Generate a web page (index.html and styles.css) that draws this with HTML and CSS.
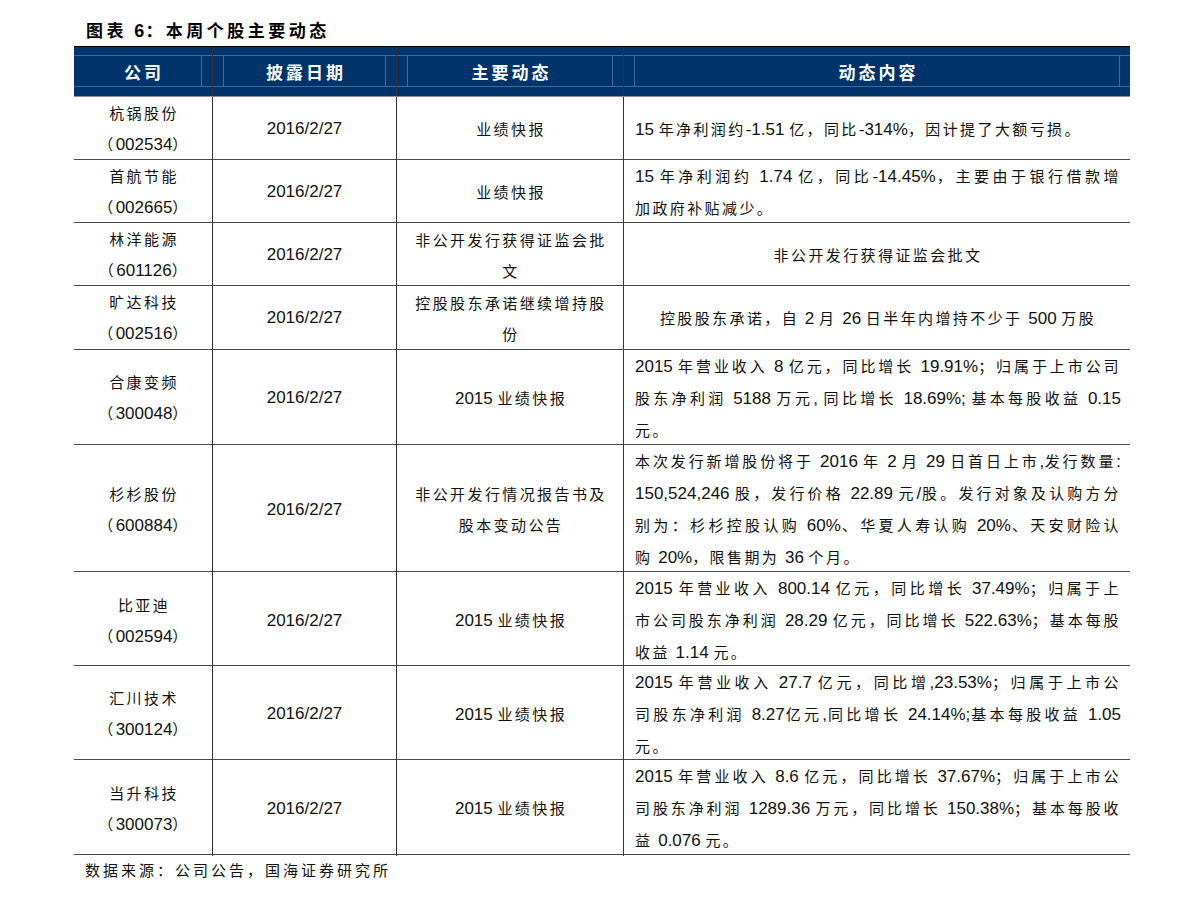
FILE: index.html
```html
<!DOCTYPE html>
<html lang="zh-CN">
<head>
<meta charset="utf-8">
<title>本周个股主要动态</title>
<link rel="stylesheet" href="styles.css">
</head>
<body>
<div class="page">
  <div class="title">图表 <span class="tn">6</span>：本周个股主要动态</div>
  <div class="tbl">
    <div class="thead">
      <div class="th c1"><div class="hl"><div class="hv nol">公司</div></div></div>
      <div class="th c2"><div class="hl"><div class="hv">披露日期</div></div></div>
      <div class="th c3"><div class="hl"><div class="hv">主要动态</div></div></div>
      <div class="th c4"><div class="hl"><div class="hv">动态内容</div></div></div>
    </div>

    <div class="row h63">
      <div class="td c1 ctr"><div>杭锅股份</div><div>（<span class="n">002534</span>）</div></div>
      <div class="td c2 ctr"><span class="n">2016/2/27</span></div>
      <div class="td c3 ctr"><div>业绩快报</div></div>
      <div class="td c4 txt"><div class="l"><span class="n">15 </span>年净利润约<span class="n">-1.51 </span>亿，同比<span class="n">-314%</span>，因计提了大额亏损。</div></div>
    </div>

    <div class="row h63">
      <div class="td c1 ctr"><div>首航节能</div><div>（<span class="n">002665</span>）</div></div>
      <div class="td c2 ctr"><span class="n">2016/2/27</span></div>
      <div class="td c3 ctr"><div>业绩快报</div></div>
      <div class="td c4 txt"><div class="l j"><span class="n">15 </span>年净利润约 <span class="n">1.74 </span>亿，同比<span class="n">-14.45%</span>，主要由于银行借款增</div><div class="l">加政府补贴减少。</div></div>
    </div>

    <div class="row h63">
      <div class="td c1 ctr"><div>林洋能源</div><div>（<span class="n">601126</span>）</div></div>
      <div class="td c2 ctr"><span class="n">2016/2/27</span></div>
      <div class="td c3 ctr"><div>非公开发行获得证监会批</div><div>文</div></div>
      <div class="td c4 ctr"><div>非公开发行获得证监会批文</div></div>
    </div>

    <div class="row h64">
      <div class="td c1 ctr"><div>旷达科技</div><div>（<span class="n">002516</span>）</div></div>
      <div class="td c2 ctr"><span class="n">2016/2/27</span></div>
      <div class="td c3 ctr"><div>控股股东承诺继续增持股</div><div>份</div></div>
      <div class="td c4 ctr"><div>控股股东承诺，自 <span class="n">2 </span>月 <span class="n">26 </span>日半年内增持不少于 <span class="n">500 </span>万股</div></div>
    </div>

    <div class="row h95">
      <div class="td c1 ctr"><div>合康变频</div><div>（<span class="n">300048</span>）</div></div>
      <div class="td c2 ctr"><span class="n">2016/2/27</span></div>
      <div class="td c3 ctr"><div><span class="n">2015 </span>业绩快报</div></div>
      <div class="td c4 txt"><div class="l j"><span class="n">2015 </span>年营业收入 <span class="n">8 </span>亿元，同比增长 <span class="n">19.91%</span>；归属于上市公司</div><div class="l j">股东净利润 <span class="n">5188 </span>万元<span class="n">, </span>同比增长 <span class="n">18.69%; </span>基本每股收益 <span class="n">0.15</span></div><div class="l">元。</div></div>
    </div>

    <div class="row h127">
      <div class="td c1 ctr"><div>杉杉股份</div><div>（<span class="n">600884</span>）</div></div>
      <div class="td c2 ctr"><span class="n">2016/2/27</span></div>
      <div class="td c3 ctr"><div>非公开发行情况报告书及</div><div>股本变动公告</div></div>
      <div class="td c4 txt"><div class="l j">本次发行新增股份将于 <span class="n">2016 </span>年 <span class="n">2 </span>月 <span class="n">29 </span>日首日上市<span class="n">,</span>发行数量<span class="n">:</span></div><div class="l j"><span class="n">150,524,246 </span>股，发行价格 <span class="n">22.89 </span>元<span class="n">/</span>股。发行对象及认购方分</div><div class="l j">别为：杉杉控股认购 <span class="n">60%</span>、华夏人寿认购 <span class="n">20%</span>、天安财险认</div><div class="l">购 <span class="n">20%</span>，限售期为 <span class="n">36 </span>个月。</div></div>
    </div>

    <div class="row h94">
      <div class="td c1 ctr"><div>比亚迪</div><div>（<span class="n">002594</span>）</div></div>
      <div class="td c2 ctr"><span class="n">2016/2/27</span></div>
      <div class="td c3 ctr"><div><span class="n">2015 </span>业绩快报</div></div>
      <div class="td c4 txt"><div class="l j"><span class="n">2015 </span>年营业收入 <span class="n">800.14 </span>亿元，同比增长 <span class="n">37.49%</span>；归属于上</div><div class="l j">市公司股东净利润 <span class="n">28.29 </span>亿元，同比增长 <span class="n">522.63%</span>；基本每股</div><div class="l">收益 <span class="n">1.14 </span>元。</div></div>
    </div>

    <div class="row h94">
      <div class="td c1 ctr"><div>汇川技术</div><div>（<span class="n">300124</span>）</div></div>
      <div class="td c2 ctr"><span class="n">2016/2/27</span></div>
      <div class="td c3 ctr"><div><span class="n">2015 </span>业绩快报</div></div>
      <div class="td c4 txt"><div class="l j"><span class="n">2015 </span>年营业收入 <span class="n">27.7 </span>亿元，同比增<span class="n">,23.53%</span>；归属于上市公</div><div class="l j">司股东净利润 <span class="n">8.27</span>亿元<span class="n">,</span>同比增长 <span class="n">24.14%;</span>基本每股收益 <span class="n">1.05</span></div><div class="l">元。</div></div>
    </div>

    <div class="row h95">
      <div class="td c1 ctr"><div>当升科技</div><div>（<span class="n">300073</span>）</div></div>
      <div class="td c2 ctr"><span class="n">2016/2/27</span></div>
      <div class="td c3 ctr"><div><span class="n">2015 </span>业绩快报</div></div>
      <div class="td c4 txt"><div class="l j"><span class="n">2015 </span>年营业收入 <span class="n">8.6 </span>亿元，同比增长 <span class="n">37.67%</span>；归属于上市公</div><div class="l j">司股东净利润 <span class="n">1289.36 </span>万元，同比增长 <span class="n">150.38%</span>；基本每股收</div><div class="l">益 <span class="n">0.076 </span>元。</div></div>
    </div>
  </div>
  <div class="foot">数据来源：公司公告，国海证券研究所</div>
</div>
</body>
</html>
```

FILE: styles.css
```css
html, body {
  margin: 0;
  padding: 0;
  background: #ffffff;
}
body {
  font-family: "Noto Sans CJK SC", "Liberation Sans", sans-serif;
  color: #111111;
}
.page {
  padding-left: 74px;
  width: 1056px;
}
.title {
  height: 46px;
  box-sizing: border-box;
  padding: 18px 0 0 12px;
  line-height: 24px;
  font-size: 17px;
  font-weight: 700;
  letter-spacing: 3.5px;
  color: #000;
}
.title .tn {
  font-family: "Liberation Sans", sans-serif;
  font-size: 18px;
  letter-spacing: 1px;
}
.tbl {
  width: 1056px;
}
.thead {
  display: grid;
  grid-template-columns: 139px 184px 227px 506px;
  height: 51px;
  box-sizing: border-box;
  border-top: 1px solid #000;
  border-bottom: 1px solid #8c8c8c;
  background: #00346a;
}
.th {
  box-sizing: border-box;
  padding-top: 8px;
}
.th.c1, .th.c2, .th.c3 {
  border-right: 1.5px solid #333;
}
.hl {
  border-top: 1px solid #3f6a99;
  border-bottom: 1px solid #3f6a99;
  height: 30px;
}
.hv {
  margin: 0 10px;
  height: 30px;
  border-left: 1px solid #3f6a99;
  border-right: 1px solid #3f6a99;
  display: flex;
  align-items: center;
  justify-content: center;
  color: #ffffff;
  font-size: 17px;
  font-weight: 700;
  letter-spacing: 3px;
  padding-left: 3px;
}
.hv.nol {
  border-left: none;
}
.row {
  display: grid;
  grid-template-columns: 139px 184px 227px 506px;
  box-sizing: border-box;
  border-bottom: 1px solid #4a4a4a;
}
.h63 { height: 63px; }
.h64 { height: 64px; }
.h94 { height: 94px; }
.h95 { height: 95px; }
.h127 { height: 127px; }
.td {
  box-sizing: border-box;
  font-size: 15px;
  letter-spacing: 2.4px;
  line-height: 31px;
  display: flex;
  flex-direction: column;
  justify-content: center;
}
.td.c1, .td.c2, .td.c3 {
  border-right: 1.5px solid #333;
}
.ctr {
  align-items: center;
  text-align: center;
}
.ctr > div {
  padding-left: 2px;
}
.txt {
  align-items: stretch;
  padding: 0 9px 0 11px;
}
.l {
  text-align: left;
}
.l.j {
  text-align: justify;
  text-align-last: justify;
}
.n {
  font-family: "Liberation Sans", sans-serif;
  font-size: 17px;
  letter-spacing: 0;
}
.foot {
  padding-left: 11px;
  line-height: 30px;
  font-size: 15px;
  letter-spacing: 3px;
  color: #111;
}
```
